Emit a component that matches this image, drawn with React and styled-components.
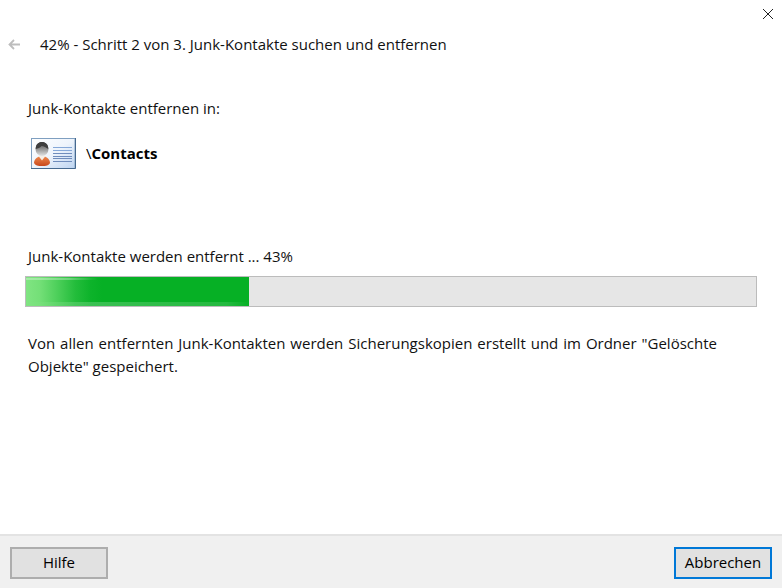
import React from "react";
import styled, { createGlobalStyle } from "styled-components";

const Global = createGlobalStyle`
  html, body { margin: 0; padding: 0; background: #fff; }
  body { font-family: "Open Sans", "Noto Sans", "Liberation Sans", sans-serif; color: #111; }
`;

const Dialog = styled.div`
  width: 782px;
  height: 588px;
  display: flex;
  flex-direction: column;
  overflow: hidden;
  background: #fff;
`;

const TitleBar = styled.div`
  height: 27px;
  display: flex;
  justify-content: flex-end;
  align-items: center;
  padding-right: 9px;
`;

const CloseButton = styled.button`
  width: 10px;
  height: 10px;
  padding: 0;
  border: 0;
  background: none;
  display: flex;
`;

const Heading = styled.div`
  height: 34px;
  display: flex;
  align-items: center;
  gap: 20px;
  padding-left: 8px;
  font-size: 15px;
`;

const BackArrow = styled.svg`
  width: 12px;
  height: 11px;
  flex: none;
`;

const Main = styled.div`
  flex: 1;
  display: flex;
  flex-direction: column;
  padding: 37px 25px 0;
`;

const Label = styled.div`
  padding-left: 3px;
  font-size: 15px;
  line-height: 20px;
`;

const FolderRow = styled.div`
  display: flex;
  align-items: center;
  gap: 10px;
  margin-top: 20px;
  padding-left: 6px;
  height: 31px;
  font-size: 15px;
  color: #000;
`;

const FolderPath = styled.span`
  padding-bottom: 2px;
`;

const FolderName = styled.span`
  font-weight: 700;
`;

const ProgressLabel = styled(Label)`
  margin-top: 77px;
`;

const Track = styled.div`
  margin-top: 10px;
  height: 29px;
  border: 1px solid #bcbcbc;
  background: #e6e6e6;
`;

const Fill = styled.div`
  position: relative;
  height: 100%;
  background: #06b025;
  overflow: hidden;
`;

const Shine = styled.div`
  position: absolute;
  inset: 0 auto 0 0;
  width: 76px;
  background: linear-gradient(90deg, rgba(128,228,130,1) 0%, rgba(122,226,124,0.95) 18%, rgba(110,222,115,0.7) 40%, rgba(90,212,100,0.35) 65%, rgba(60,200,80,0.12) 85%, rgba(6,176,37,0) 100%);
`;

const TopGlint = styled.div`
  position: absolute;
  top: 1px;
  left: 0;
  width: 72px;
  height: 2px;
  background: linear-gradient(90deg, rgba(255,255,255,0.3) 0%, rgba(255,255,255,0.3) 60%, rgba(255,255,255,0) 100%);
`;

const BottomGlow = styled.div`
  position: absolute;
  inset: auto 0 0 0;
  height: 4px;
  background: linear-gradient(90deg, rgba(255,255,255,0.25) 0%, rgba(255,255,255,0.12) 90%, rgba(255,255,255,0) 100%);
`;

const Note = styled.p`
  margin: 25px 0 0 3px;
  width: 689px;
  font-size: 15px;
  line-height: 23px;
  text-align: justify;
`;

const Footer = styled.div`
  height: 54px;
  box-sizing: border-box;
  border-top: 2px solid #e3e3e3;
  background: #f0f0f0;
  display: flex;
  justify-content: space-between;
  padding: 11px 10px 0;
`;

const Button = styled.button`
  width: 98px;
  height: 32px;
  box-sizing: border-box;
  border: ${p => (p.$primary ? "2px solid #0078d7" : "2px solid #adadad")};
  background: #e1e1e1;
  font-family: inherit;
  font-size: 15px;
  color: #000;
  padding: 0 0 2px;
`;

const ContactIcon = () => (
  <svg width="45" height="31" viewBox="0 0 45 31">
    <defs>
      <linearGradient id="card" x1="0" y1="0" x2="1" y2="1">
        <stop offset="0" stopColor="#ffffff" />
        <stop offset="0.5" stopColor="#eef4fc" />
        <stop offset="1" stopColor="#bcd3f0" />
      </linearGradient>
      <linearGradient id="head" x1="0" y1="0" x2="0" y2="1">
        <stop offset="0" stopColor="#4b4b4b" />
        <stop offset="0.45" stopColor="#8a8a8a" />
        <stop offset="1" stopColor="#e4e4e4" />
      </linearGradient>
      <linearGradient id="body" x1="0" y1="0" x2="0" y2="1">
        <stop offset="0" stopColor="#ef8a4e" />
        <stop offset="1" stopColor="#c8481c" />
      </linearGradient>
    </defs>
    <rect x="0.5" y="0.5" width="43.500" height="30" fill="url(#card)" stroke="#7f9fc0" />
    <path d="M0 30.500H44.500V0" fill="none" stroke="#46698f" />
    <path d="M3 25c0-4 4-7 8-7s8 3 8 7c-1 2.500-4 3-8 3s-7-.5-8-3z" fill="url(#body)" />
    <path d="M7.500 18l3.500 4.500 3.500-4.500-3.500-1.500z" fill="#f6eee6" />
    <ellipse cx="11" cy="11" rx="6.500" ry="7" fill="url(#head)" />
    <path d="M4.700 11c0-5 3-7 6.300-7s6.300 2 6.300 7c-2-1.500-4.500-3-6.800-3-1.500 2-3.500 2.500-5.800 3z" fill="#3e3e3e" />
    <g stroke="#86a8d8">
      <path d="M22 9.500h19M22 12.500h19" />
    </g>
    <g stroke="#6f8cbc">
      <path d="M22 15.500h19M22 18.500h19M22 20.500h19M22 23.500h19" />
    </g>
  </svg>
);

export default function App() {
  return (
    <Dialog>
      <Global />
      <TitleBar>
        <CloseButton aria-label="Schließen">
          <svg width="10" height="10" viewBox="0 0 10 10">
            <path d="M0 0L10 10M10 0L0 10" stroke="#222" strokeWidth="1" fill="none" />
          </svg>
        </CloseButton>
      </TitleBar>
      <Heading>
        <BackArrow viewBox="0 0 12 11">
          <path d="M12 5.500H1.500M6 1L1.500 5.500L6 10" stroke="#bdbdbd" strokeWidth="1.800" fill="none" />
        </BackArrow>
        42% - Schritt 2 von 3. Junk-Kontakte suchen und entfernen
      </Heading>
      <Main>
        <Label>Junk-Kontakte entfernen in:</Label>
        <FolderRow>
          <ContactIcon />
          <FolderPath>\<FolderName>Contacts</FolderName></FolderPath>
        </FolderRow>
        <ProgressLabel>Junk-Kontakte werden entfernt ... 43%</ProgressLabel>
        <Track>
          <Fill style={{ width: `${(223 / 730) * 100}%` }}>
            <BottomGlow />
            <Shine />
            <TopGlint />
          </Fill>
        </Track>
        <Note>
          Von allen entfernten Junk-Kontakten werden Sicherungskopien erstellt und im Ordner "Gelöschte Objekte" gespeichert.
        </Note>
      </Main>
      <Footer>
        <Button>Hilfe</Button>
        <Button $primary>Abbrechen</Button>
      </Footer>
    </Dialog>
  );
}
